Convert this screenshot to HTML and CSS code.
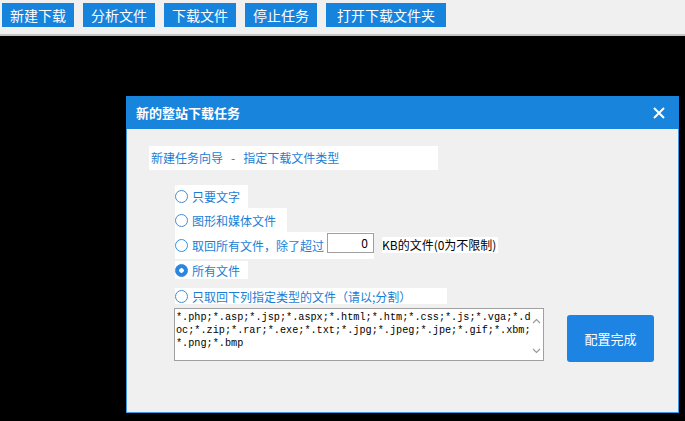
FILE: index.html
```
<!DOCTYPE html>
<html lang="zh-CN">
<head>
<meta charset="utf-8">
<link rel="stylesheet" href="styles.css">
</head>
<body>
<div class="toolbar">
  <span class="btn">新建下载</span>
  <span class="btn">分析文件</span>
  <span class="btn">下载文件</span>
  <span class="btn">停止任务</span>
  <span class="btn wide">打开下载文件夹</span>
</div>
<div class="canvas">
  <div class="dialog">
    <div class="titlebar">
      <span class="title">新的整站下载任务</span>
      <svg class="close" width="12" height="12" viewBox="0 0 12 12"><path d="M1 1 L11 11 M11 1 L1 11" stroke="#ffffff" stroke-width="2" fill="none"/></svg>
    </div>
    <div class="body">
      <div class="heading">新建任务向导<span class="dash">-</span>指定下载文件类型</div>
      <div class="options">
        <div class="opt r1"><span class="radio"></span>只要文字</div>
        <div class="opt r2"><span class="radio"></span>图形和媒体文件</div>
        <div class="row3">
          <div class="opt r3"><span class="radio"></span>取回所有文件，除了超过<span class="num">0</span></div>
          <span class="kb">KB的文件(0为不限制)</span>
        </div>
        <div class="opt r4"><span class="radio on"></span>所有文件</div>
        <div class="opt r5"><span class="radio"></span>只取回下列指定类型的文件（请以;分割）</div>
      </div>
      <div class="bottom">
        <div class="types">
          <div class="types-text">*.php;*.asp;*.jsp;*.aspx;*.html;*.htm;*.css;*.js;*.vga;*.d<br>oc;*.zip;*.rar;*.exe;*.txt;*.jpg;*.jpeg;*.jpe;*.gif;*.xbm;<br>*.png;*.bmp</div>
          <div class="scroll">
            <svg width="9" height="6" viewBox="0 0 9 6"><path d="M1 5 L4.5 1.5 L8 5" stroke="#9a9a9a" stroke-width="1.2" fill="none"/></svg>
            <svg width="9" height="6" viewBox="0 0 9 6"><path d="M1 1 L4.5 4.5 L8 1" stroke="#9a9a9a" stroke-width="1.2" fill="none"/></svg>
          </div>
        </div>
        <div class="done">配置完成</div>
      </div>
    </div>
  </div>
</div>
</body>
</html>
```
FILE: styles.css
```
* { box-sizing: border-box; }
html, body { margin: 0; padding: 0; }
body {
  width: 685px;
  height: 421px;
  overflow: hidden;
  background: #000;
  font-family: "Noto Sans CJK SC", "Noto Sans", sans-serif;
  position: relative;
}
.toolbar {
  height: 36px;
  background: #f0f0f0;
  border-bottom: 2px solid #c4c4c4;
  display: flex;
  gap: 9px;
  padding: 3px 0 0 2px;
  align-items: flex-start;
}
.btn {
  height: 24px;
  padding: 0 8px;
  background: #1683dc;
  color: #fff;
  font-size: 14px;
  line-height: 24px;
  white-space: nowrap;
}
.btn.wide { padding: 0 11px; }
.canvas { height: 385px; }
.dialog {
  position: absolute;
  left: 126px;
  top: 96px;
  width: 553px;
  height: 317px;
  background: #f0f0f0;
  border: 1px solid #3d97e3;
  border-top: none;
}
.titlebar {
  height: 33px;
  margin: 0 -1px;
  background: #1884dc;
  display: flex;
  align-items: center;
  justify-content: space-between;
  padding: 0 14px 0 10px;
}
.title {
  color: #fff;
  font-size: 13px;
  font-weight: bold;
}
.body {
  padding: 17px 0 0 22px;
}
.heading {
  width: 289px;
  height: 24px;
  background: #fff;
  color: #1a7ed6;
  font-size: 12px;
  line-height: 24px;
  padding-left: 2px;
  white-space: nowrap;
}
.dash { margin: 0 8px; }
.options {
  margin: 15px 0 0 26px;
  display: flex;
  flex-direction: column;
  align-items: flex-start;
}
.opt {
  display: flex;
  align-items: center;
  background: #fff;
  color: #1a7ed6;
  font-size: 12px;
  white-space: nowrap;
  padding-right: 8px;
}
.radio {
  width: 13px;
  height: 13px;
  border: 1px solid #3a8fe0;
  border-radius: 50%;
  background: #fff;
  margin: 0 4px 0 0;
  flex: none;
}
.radio.on {
  border-color: #2b86e0;
  background: radial-gradient(circle, #fff 0 2px, #2b86e0 2.5px);
}
.r1 { height: 23px; min-width: 72px; }
.r2 { height: 24px; min-width: 112px; }
.row3 { display: flex; align-items: flex-start; }
.r3 { height: 27px; padding-right: 0; align-items: center; }
.num {
  margin-left: 3px;
  width: 47px;
  height: 20px;
  border: 1px solid #a0a0a0;
  background: #fff;
  color: #000;
  text-align: right;
  padding-right: 5px;
  font-size: 12px;
  line-height: 18px;
  align-self: flex-start;
  margin-top: 1px;
  flex: none;
}
.kb {
  margin: 5px 0 0 8px;
  height: 16px;
  background: #fff;
  color: #000;
  font-size: 12px;
  line-height: 16px;
  padding-right: 2px;
  white-space: nowrap;
}
.r4 { height: 18px; min-width: 72px; margin-top: 2px; }
.r5 { height: 16px; min-width: 272px; margin-top: 9px; }
.bottom {
  display: flex;
  align-items: flex-start;
  gap: 23px;
  margin: 4px 0 0 25px;
}
.types {
  width: 370px;
  height: 53px;
  background: #fff;
  border: 1px solid #a0a0a0;
  display: flex;
}
.types-text {
  flex: 1;
  font-family: "Liberation Mono", monospace;
  font-size: 10.2px;
  line-height: 13px;
  color: #000;
  padding: 2px 0 0 1px;
  white-space: nowrap;
}
.scroll {
  width: 16px;
  display: flex;
  flex-direction: column;
  justify-content: space-between;
  align-items: center;
  padding: 9px 0 6px;
}
.done {
  margin-top: 7px;
  width: 87px;
  height: 47px;
  background: #1e84e4;
  border-radius: 3px;
  color: #fff;
  font-size: 13px;
  display: flex;
  align-items: center;
  justify-content: center;
}
```
